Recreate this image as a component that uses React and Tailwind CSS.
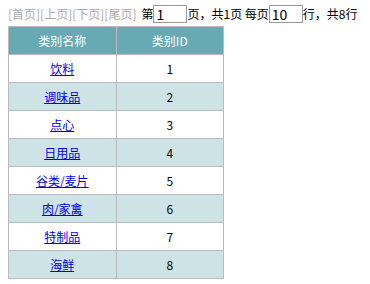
const rows = [
  { name: "饮料", id: 1 },
  { name: "调味品", id: 2 },
  { name: "点心", id: 3 },
  { name: "日用品", id: 4 },
  { name: "谷类/麦片", id: 5 },
  { name: "肉/家禽", id: 6 },
  { name: "特制品", id: 7 },
  { name: "海鲜", id: 8 },
];

export default function App() {
  return (
    <div
      className="bg-white w-[370px] h-[284px] pl-2 text-[12px] text-black"
      style={{ fontFamily: '"Noto Sans CJK SC", "Liberation Sans", sans-serif' }}
    >
      <div className="flex items-center pt-[5px] h-[23px] whitespace-nowrap">
        <span className="text-[#aaaaaa]">[首页][上页][下页][尾页]</span>
        <span className="ml-[5px]">第</span>
        <input
          readOnly
          value="1"
          className="w-[34px] h-[18px] border border-[#999] px-[2px] text-[14px] leading-none outline-none"
        />
        <span>页，共1页 每页</span>
        <input
          readOnly
          value="10"
          className="w-[34px] h-[18px] border border-[#999] px-[2px] text-[14px] leading-none outline-none"
        />
        <span>行，共8行</span>
      </div>
      <table className="mt-[3px] border-collapse w-[216px]">
        <thead>
          <tr className="bg-[#67aab3] text-white">
            <th className="border border-[#bbbbbb] h-[28px] w-[108px] font-normal">类别名称</th>
            <th className="border border-[#bbbbbb] h-[28px] w-[108px] font-normal">类别ID</th>
          </tr>
        </thead>
        <tbody>
          {rows.map((r, i) => (
            <tr key={r.id} className={i % 2 ? "bg-[#cde3e5]" : "bg-white"}>
              <td className="border border-[#bbbbbb] h-[28px] text-center">
                <a href="#" className="text-[#0000ee] underline">{r.name}</a>
              </td>
              <td className="border border-[#bbbbbb] h-[28px] text-center">{r.id}</td>
            </tr>
          ))}
        </tbody>
      </table>
    </div>
  );
}
